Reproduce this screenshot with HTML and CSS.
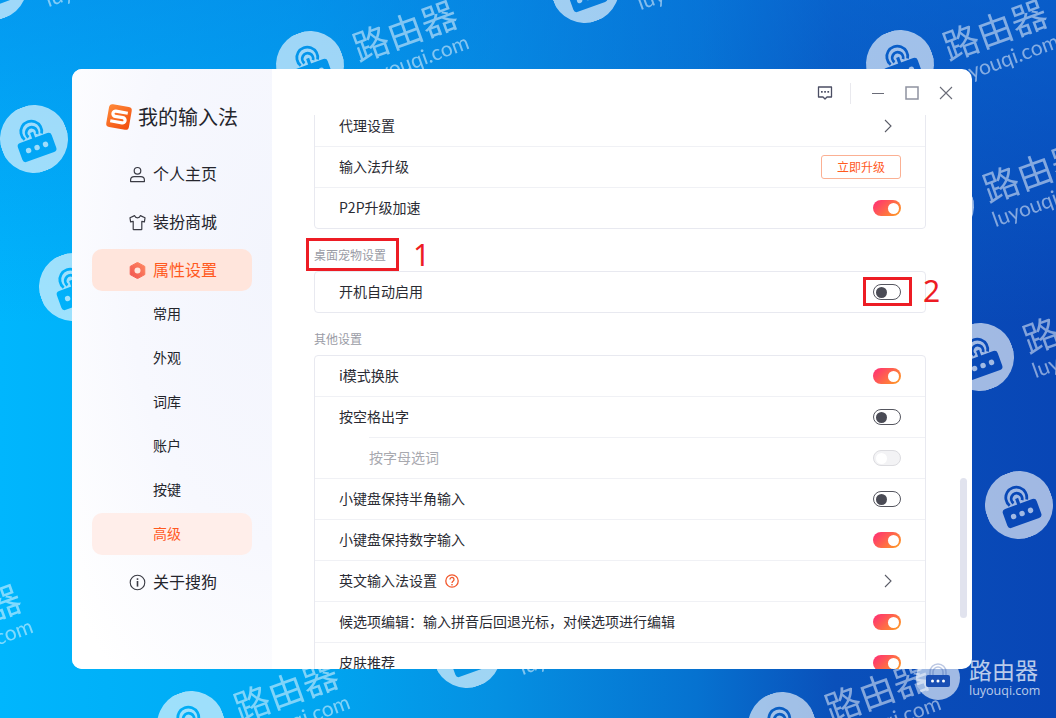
FILE: index.html
```html
<!DOCTYPE html>
<html lang="zh-CN">
<head>
<meta charset="utf-8">
<title>我的输入法</title>
<link rel="stylesheet" href="styles.css">
</head>
<body>
<svg class="defs" width="0" height="0" aria-hidden="true">
  <defs>
    <mask id="wm-cut" maskUnits="userSpaceOnUse" x="0" y="0" width="68" height="68">
      <rect width="68" height="68" fill="#fff"/>
      <rect x="16" y="33" width="36" height="20" rx="3.5" fill="#000"/>
      <path d="M25 31.500A10.500 10.500 0 1 1 43 31.500M29.500 30.500A5.500 5.500 0 1 1 38.500 30.500" fill="none" stroke="#000" stroke-width="2.800"/>
      <rect x="32.400" y="27" width="3.200" height="7" fill="#000"/>
      <circle cx="25" cy="43" r="2.7" fill="#fff"/>
      <circle cx="34" cy="43" r="2.7" fill="#fff"/>
      <circle cx="43" cy="43" r="2.7" fill="#fff"/>
    </mask>
    <symbol id="wm-disc" viewBox="0 0 68 68">
      <circle cx="34" cy="34" r="34" fill="#fff" mask="url(#wm-cut)"/>
    </symbol>
    <linearGradient id="hex-grad" x1="0" y1="1" x2="1" y2="0">
      <stop offset="0" stop-color="#f0524f"/>
      <stop offset="1" stop-color="#ff8a62"/>
    </linearGradient>
    <linearGradient id="logo-grad" x1="0" y1="0" x2="1" y2="1">
      <stop offset="0" stop-color="#ff8a3a"/>
      <stop offset="1" stop-color="#f24c0c"/>
    </linearGradient>
  </defs>
</svg>

<div class="desktop">
  <div class="wm wm-z"><svg class="wm-icon"><use href="#wm-disc"/></svg><div class="wm-text"><span class="wm-cn">路由器</span><span class="wm-en">luyouqi.com</span></div></div>
  <div class="wm wm-a"><svg class="wm-icon"><use href="#wm-disc"/></svg><div class="wm-text"><span class="wm-cn">路由器</span><span class="wm-en">luyouqi.com</span></div></div>
  <div class="wm wm-b"><svg class="wm-icon"><use href="#wm-disc"/></svg><div class="wm-text"><span class="wm-cn">路由器</span><span class="wm-en">luyouqi.com</span></div></div>
  <div class="wm wm-c"><svg class="wm-icon"><use href="#wm-disc"/></svg><div class="wm-text"><span class="wm-cn">路由器</span><span class="wm-en">luyouqi.com</span></div></div>
  <div class="wm wm-d"><svg class="wm-icon"><use href="#wm-disc"/></svg><div class="wm-text"><span class="wm-cn">路由器</span><span class="wm-en">luyouqi.com</span></div></div>
  <div class="wm wm-e"><svg class="wm-icon"><use href="#wm-disc"/></svg><div class="wm-text"><span class="wm-cn">路由器</span><span class="wm-en">luyouqi.com</span></div></div>
  <div class="wm wm-f"><svg class="wm-icon"><use href="#wm-disc"/></svg><div class="wm-text"><span class="wm-cn">路由器</span><span class="wm-en">luyouqi.com</span></div></div>
  <div class="wm wm-g"><svg class="wm-icon"><use href="#wm-disc"/></svg><div class="wm-text"><span class="wm-cn">路由器</span><span class="wm-en">luyouqi.com</span></div></div>
  <div class="wm wm-h"><svg class="wm-icon"><use href="#wm-disc"/></svg><div class="wm-text"><span class="wm-cn">路由器</span><span class="wm-en">luyouqi.com</span></div></div>
  <div class="wm wm-i"><svg class="wm-icon"><use href="#wm-disc"/></svg><div class="wm-text"><span class="wm-cn">路由器</span><span class="wm-en">luyouqi.com</span></div></div>
  <div class="wm wm-j"><svg class="wm-icon"><use href="#wm-disc"/></svg><div class="wm-text"><span class="wm-cn">路由器</span><span class="wm-en">luyouqi.com</span></div></div>
  <div class="wm wm-k"><svg class="wm-icon"><use href="#wm-disc"/></svg><div class="wm-text"><span class="wm-cn">路由器</span><span class="wm-en">luyouqi.com</span></div></div>
  <div class="wm wm-l"><svg class="wm-icon"><use href="#wm-disc"/></svg><div class="wm-text"><span class="wm-cn">路由器</span><span class="wm-en">luyouqi.com</span></div></div>

  <div class="window">
    <aside class="sidebar">
      <div class="brand">
        <svg class="brand-logo" viewBox="0 0 28 28" width="28" height="28">
          <g transform="rotate(10 14 14)">
            <rect x="2.500" y="2.500" width="23" height="23" rx="3.500" fill="url(#logo-grad)"/>
            <path d="M22 8.800H10a2.600 2.600 0 0 0 0 5.200h8a2.600 2.600 0 0 1 0 5.200H6" fill="none" stroke="#fff" stroke-width="3.200"/>
          </g>
        </svg>
        <span>我的输入法</span>
      </div>
      <nav class="nav">
        <a class="nav-item">
          <svg class="nav-icon" viewBox="0 0 17 17"><circle cx="8.5" cy="4.8" r="3.3" fill="none" stroke="#3a3b44" stroke-width="1.2"/><path d="M1.6 15.6v-1.6c0-2 1.6-3.4 3.6-3.4h6.6c2 0 3.6 1.4 3.6 3.4v1.6z" fill="none" stroke="#3a3b44" stroke-width="1.2" stroke-linejoin="round"/></svg>
          <span>个人主页</span>
        </a>
        <a class="nav-item">
          <svg class="nav-icon" viewBox="0 0 17 17"><path d="M5.6 1.6 1 3.8l.6 4 2.6-.4v7.8c0 .3.2.5.5.5h7.6c.3 0 .5-.2.5-.5V7.4l2.6.4.6-4-4.6-2.2c-.4 1.4-1.5 2.2-2.9 2.2S6 3 5.6 1.6z" fill="none" stroke="#3a3b44" stroke-width="1.2" stroke-linejoin="round"/></svg>
          <span>装扮商城</span>
        </a>
        <a class="nav-item nav-item-on">
          <svg class="nav-icon" viewBox="0 0 17 17"><path d="M8.5.4 15.8 4.4v8.2L8.5 16.6 1.2 12.6V4.4z" fill="url(#hex-grad)" stroke="url(#hex-grad)" stroke-width="1" stroke-linejoin="round"/><circle cx="8.5" cy="8.5" r="3" fill="#ffe6dd"/></svg>
          <span>属性设置</span>
        </a>
        <div class="subnav">
          <a class="sub-item">常用</a>
          <a class="sub-item">外观</a>
          <a class="sub-item">词库</a>
          <a class="sub-item">账户</a>
          <a class="sub-item">按键</a>
          <a class="sub-item sub-item-on">高级</a>
        </div>
        <a class="nav-item">
          <svg class="nav-icon" viewBox="0 0 17 17"><circle cx="8.5" cy="8.5" r="7.3" fill="none" stroke="#3a3b44" stroke-width="1.1"/><rect x="7.7" y="7" width="1.6" height="5.6" fill="#3a3b44"/><rect x="7.7" y="4.3" width="1.6" height="1.6" fill="#3a3b44"/></svg>
          <span>关于搜狗</span>
        </a>
      </nav>
    </aside>

    <main class="main">
      <header class="titlebar">
        <svg class="tb-icon" viewBox="0 0 16 16" width="16" height="16"><path d="M1.5 2h13v10H10l-2 2-2-2H1.500z" fill="none" stroke="#4b4e63" stroke-width="1.3" stroke-linejoin="round"/><rect x="4" y="6" width="1.7" height="1.7" fill="#4b4e63"/><rect x="7.200" y="6" width="1.7" height="1.7" fill="#4b4e63"/><rect x="10.400" y="6" width="1.7" height="1.7" fill="#4b4e63"/></svg>
        <span class="tb-divider"></span>
        <svg class="tb-min" viewBox="0 0 14 14" width="14" height="14"><path d="M1 7.500h12" stroke="#6a6c78" stroke-width="1.200"/></svg>
        <svg class="tb-max" viewBox="0 0 14 14" width="14" height="14"><rect x="1" y="1" width="12" height="12" fill="none" stroke="#8f92a0" stroke-width="1.500"/></svg>
        <svg class="tb-close" viewBox="0 0 14 14" width="14" height="14"><path d="M1 1l12 12M13 1L1 13" stroke="#6a6c78" stroke-width="1.100"/></svg>
      </header>
      <div class="scroller">
        <div class="scroll-inner">
          <section class="card">
            <div class="row"><span>代理设置</span>
              <svg class="chevron" viewBox="0 0 8 14" width="8" height="14"><path d="M1 1l6 6-6 6" fill="none" stroke="#5b5d68" stroke-width="1.100"/></svg>
            </div>
            <div class="row"><span>输入法升级</span><span class="upgrade">立即升级</span></div>
            <div class="row"><span>P2P升级加速</span><span class="toggle toggle-on"></span></div>
          </section>
          <h2 class="section-label">桌面宠物设置</h2>
          <section class="card">
            <div class="row"><span>开机自动启用</span><span class="toggle toggle-off"></span></div>
          </section>
          <h2 class="section-label">其他设置</h2>
          <section class="card">
            <div class="row"><span>i模式换肤</span><span class="toggle toggle-on"></span></div>
            <div class="row"><span>按空格出字</span><span class="toggle toggle-off"></span></div>
            <div class="row row-sub"><span>按字母选词</span><span class="toggle toggle-disabled"></span></div>
            <div class="row"><span>小键盘保持半角输入</span><span class="toggle toggle-off"></span></div>
            <div class="row"><span>小键盘保持数字输入</span><span class="toggle toggle-on"></span></div>
            <div class="row"><span class="row-title">英文输入法设置
              <svg class="help" viewBox="0 0 14 14" width="14" height="14"><circle cx="7" cy="7" r="6.200" fill="none" stroke="#f2582c" stroke-width="1.300"/><path d="M5 5.400a2 2 0 1 1 3.200 1.600C7.400 7.600 7 8 7 9" fill="none" stroke="#f2582c" stroke-width="1.300"/><rect x="6.300" y="10" width="1.400" height="1.400" fill="#f2582c"/></svg></span>
              <svg class="chevron" viewBox="0 0 8 14" width="8" height="14"><path d="M1 1l6 6-6 6" fill="none" stroke="#5b5d68" stroke-width="1.100"/></svg>
            </div>
            <div class="row"><span>候选项编辑：输入拼音后回退光标，对候选项进行编辑</span><span class="toggle toggle-on"></span></div>
            <div class="row"><span>皮肤推荐</span><span class="toggle toggle-on"></span></div>
          </section>
        </div>
        <span class="scroll-thumb"></span>
      </div>
    </main>
  </div>

  <div class="mark-box mark-box-1"></div>
  <div class="mark-num mark-num-1">1</div>
  <div class="mark-box mark-box-2"></div>
  <div class="mark-num mark-num-2">2</div>

  <div class="corner-logo">
    <svg class="corner-icon" viewBox="0 0 44 44" width="44" height="44">
      <circle cx="22" cy="22" r="22" fill="#fff" fill-opacity=".62"/>
      <path d="M17 19v-3a5 5 0 0 1 10 0v3M14 19v-3a8 8 0 0 1 16 0v3" fill="none" stroke="#3c5fae" stroke-opacity=".35" stroke-width="1.500"/>
      <rect x="10" y="19" width="24" height="12" rx="2" fill="#1a4fb4"/>
      <circle cx="16.500" cy="25" r="1.500" fill="#fff"/>
      <circle cx="22" cy="25" r="1.500" fill="#fff"/>
      <circle cx="27.500" cy="25" r="1.500" fill="#fff"/>
    </svg>
    <div class="corner-text">
      <span class="corner-cn">路由器</span>
      <span class="corner-en">luyouqi.com</span>
    </div>
  </div>
</div>
</body>
</html>
```
FILE: styles.css
```css
* { box-sizing: border-box; }
html, body { margin: 0; height: 100%; }
body {
  font-family: "Noto Sans CJK SC", "Noto Sans", sans-serif;
  overflow: hidden;
}
.defs { position: absolute; }

.desktop {
  position: relative;
  width: 1056px;
  height: 718px;
  overflow: hidden;
  padding: 69px 84px 49px 72px;
  background:
    linear-gradient(180deg, rgba(8, 120, 225, .45) 0%, rgba(8, 120, 225, 0) 45%),
    linear-gradient(90deg, #00b6fd 0%, #00a8f2 28%, #0590e2 47%, #0672d0 66%, #0a50ba 79%, #0846b6 100%);
}

/* watermark tiles on the wallpaper */
.wm {
  position: absolute;
  display: flex;
  gap: 11px;
  width: 200px;
  height: 68px;
  transform: rotate(-20deg);
  transform-origin: 34px 34px;
}
.wm-icon { flex: none; width: 68px; height: 68px; opacity: .62; }
.wm-text {
  display: flex;
  flex-direction: column;
  align-items: center;
  margin-top: 13px;
  color: #fff;
  opacity: .5;
  white-space: nowrap;
}
.wm-cn { font-size: 36px; line-height: 38px; }
.wm-en { font-size: 21px; line-height: 22px; margin-top: 3px; font-family: Lato, sans-serif; }
.wm-z { left: -41px; top: -48px; }
.wm-a { left: 276px; top: 31px; }
.wm-b { left: 551px; top: -45px; }
.wm-c { left: 866px; top: 30px; }
.wm-d { left: 0; top: 105px; }
.wm-e { left: 946px; top: 323px; }
.wm-f { left: 985px; top: 471px; }
.wm-g { left: 906px; top: 172px; }
.wm-h { left: 39px; top: 253px; }
.wm-i { left: 157px; top: 691px; }
.wm-j { left: 433px; top: 620px; }
.wm-k { left: 748px; top: 692px; }
.wm-l { left: -160px; top: 615px; }

/* window */
.window {
  position: relative;
  z-index: 1;
  display: flex;
  width: 900px;
  height: 600px;
  border-radius: 10px;
  overflow: hidden;
  background: #fff;
}

/* sidebar */
.sidebar {
  flex: none;
  width: 200px;
  padding: 33px 20px 0;
  background: radial-gradient(ellipse 260px 520px at 100% 32%, #f3f5fd 0%, #f7f8fe 55%, #fff 100%);
}
.brand {
  display: flex;
  align-items: center;
  gap: 5px;
  height: 30px;
  margin-left: 13px;
  font-size: 20px;
  line-height: 30px;
  color: #24252c;
}
.brand-logo { flex: none; }
.nav {
  display: flex;
  flex-direction: column;
  gap: 6px;
  margin-top: 21px;
}
.nav-item {
  display: flex;
  align-items: center;
  gap: 7px;
  height: 42px;
  padding-left: 37px;
  border-radius: 10px;
  font-size: 16px;
  color: #24252c;
}
.nav-item span { margin-top: -2px; }
.nav-icon { flex: none; width: 17px; height: 17px; }
.nav-item-on { background: #ffe5dc; color: #ff5a1f; }
.subnav {
  display: flex;
  flex-direction: column;
  gap: 2px;
  margin-top: -4px;
}
.sub-item {
  display: flex;
  align-items: center;
  height: 42px;
  padding: 0 0 2px 61px;
  border-radius: 10px;
  font-size: 14px;
  color: #24252c;
}
.sub-item-on { background: #ffeeea; color: #ff5a1f; }

/* main */
.main {
  flex: 1;
  min-width: 0;
  display: flex;
  flex-direction: column;
}
.titlebar {
  flex: none;
  display: flex;
  align-items: center;
  height: 46px;
  padding: 2px 18px 0 545px;
}
.tb-icon { flex: none; margin-right: 17px; }
.tb-divider { flex: none; width: 1px; height: 21px; margin-right: 20px; background: #e9e9ee; }
.tb-min { flex: none; margin-right: 20px; }
.tb-max { flex: none; margin-right: 20px; }
.tb-close { flex: none; }

.scroller {
  position: relative;
  flex: 1;
  min-height: 0;
  overflow: hidden;
}
.scroll-inner {
  margin: -10px 46px 0 42px;
}
.scroll-thumb {
  position: absolute;
  top: 363px;
  right: 5px;
  width: 7px;
  height: 140px;
  border-radius: 4px;
  background: #e1e3ee;
}
.card {
  border: 1px solid #e8e9f0;
  border-radius: 4px;
}
.section-label {
  margin: 16px 0 6px;
  height: 20px;
  font-size: 12px;
  font-weight: 400;
  line-height: 20px;
  color: #9a9ca6;
}
.row {
  display: flex;
  align-items: center;
  justify-content: space-between;
  height: 40px;
  padding: 0 24px;
  font-size: 14px;
  color: #2a2b33;
  box-sizing: content-box;
}
.row > span:first-child { margin-top: -2px; }
.row + .row { border-top: 1px solid #f0f1f5; }
.row-sub { margin-left: 54px; padding-left: 0; color: #a8a9af; }
.row-title { display: flex; align-items: center; gap: 8px; }
.help { flex: none; margin-top: 2px; }
.chevron { flex: none; margin-right: 9px; }
.upgrade {
  display: flex;
  align-items: center;
  justify-content: center;
  width: 80px;
  height: 24px;
  padding-bottom: 2px;
  border: 1px solid #fbb093;
  border-radius: 3px;
  font-size: 12px;
  color: #ff5a1f;
}
.toggle {
  flex: none;
  position: relative;
  width: 28px;
  height: 16px;
  border-radius: 8px;
}
.toggle::after {
  content: "";
  position: absolute;
  top: 2.5px;
  width: 11px;
  height: 11px;
  border-radius: 50%;
}
.toggle-on { background: linear-gradient(135deg, #ff2a78 0%, #ffa020 100%); }
.toggle-on::after { right: 2.5px; background: #fff; }
.toggle-off { border: 1px solid #55565f; background: #fff; }
.toggle-off::after { top: 1.5px; left: 1.5px; background: #4a4b55; }
.toggle-disabled { border: 1px solid #dcdce0; background: #f3f3f5; }
.toggle-disabled::after { top: 1.5px; left: 1.5px; background: #fff; }

/* red annotations pasted over the screenshot */
.mark-box {
  position: absolute;
  z-index: 2;
  border: 3px solid #ed1c24;
}
.mark-box-1 { left: 306px; top: 238px; width: 93px; height: 33px; }
.mark-box-2 { left: 863px; top: 277px; width: 49px; height: 29px; }
.mark-num {
  position: absolute;
  z-index: 2;
  font-family: "Noto Sans", sans-serif;
  font-weight: 400;
  font-size: 30px;
  line-height: 30px;
  color: #ed1c24;
}
.mark-num-1 { left: 413px; top: 240px; }
.mark-num-2 { left: 923px; top: 276px; }

/* bottom-right logo stamped on the image */
.corner-logo {
  position: absolute;
  z-index: 2;
  left: 916px;
  top: 656px;
  display: flex;
  gap: 9px;
  color: rgba(255, 255, 255, .72);
}
.corner-icon { flex: none; }
.corner-text {
  display: flex;
  flex-direction: column;
  align-items: flex-start;
}
.corner-cn { font-size: 23px; line-height: 26px; }
.corner-en { font-size: 12.500px; line-height: 15px; margin-top: 1px; font-family: "Open Sans", sans-serif; }
```
